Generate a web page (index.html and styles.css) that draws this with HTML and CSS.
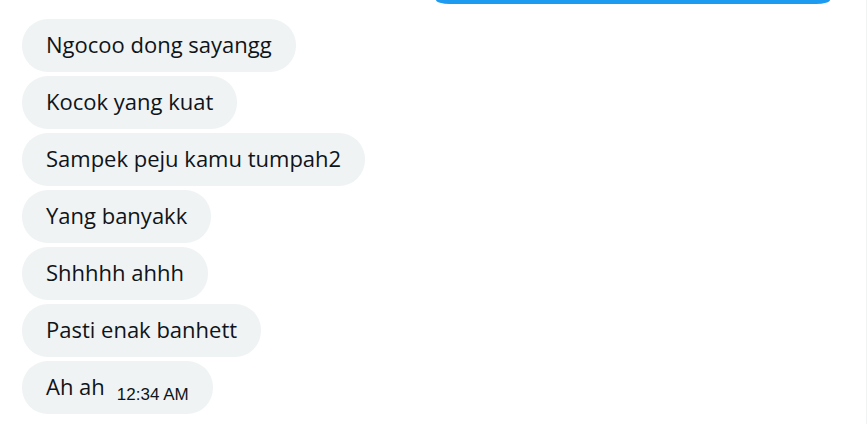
FILE: index.html
```html
<!DOCTYPE html>
<html>
<head>
<meta charset="utf-8">
<link rel="stylesheet" href="styles.css">
</head>
<body>
<div class="page">
  <div class="sent-row"><div class="sent-bubble"></div></div>
  <div class="messages">
    <div class="bubble">Ngocoo dong sayangg</div>
    <div class="bubble">Kocok yang kuat</div>
    <div class="bubble">Sampek peju kamu tumpah2</div>
    <div class="bubble">Yang banyakk</div>
    <div class="bubble">Shhhhh ahhh</div>
    <div class="bubble">Pasti enak banhett</div>
    <div class="bubble"><span>Ah ah</span><span class="time">12:34 AM</span></div>
  </div>
</div>
</body>
</html>
```
FILE: styles.css
```css
* { box-sizing: border-box; }
html, body { margin: 0; padding: 0; background: #fff; }
body { width: 867px; height: 424px; overflow: hidden; }
.page {
  height: 424px;
  border-right: 1px solid #eff3f4;
  font-family: "Open Sans", "Noto Sans", sans-serif;
  color: #0f1419;
}
.sent-row { height: 4px; padding-left: 436px; }
.sent-bubble {
  width: 394px;
  height: 4px;
  background: #1d9bf0;
  border-radius: 0 0 14px 14px / 0 0 4px 4px;
}
.messages {
  display: flex;
  flex-direction: column;
  align-items: flex-start;
  gap: 4px;
  padding: 15px 0 0 22px;
}
.bubble {
  background: #eff3f4;
  border-radius: 26px;
  height: 53px;
  padding: 0 24px 3px 24px;
  display: flex;
  align-items: center;
  font-size: 22px;
  white-space: nowrap;
}
.time {
  font-family: "Liberation Sans", sans-serif;
  font-size: 17px;
  margin-left: 12px;
  margin-top: 18px;
}
```
